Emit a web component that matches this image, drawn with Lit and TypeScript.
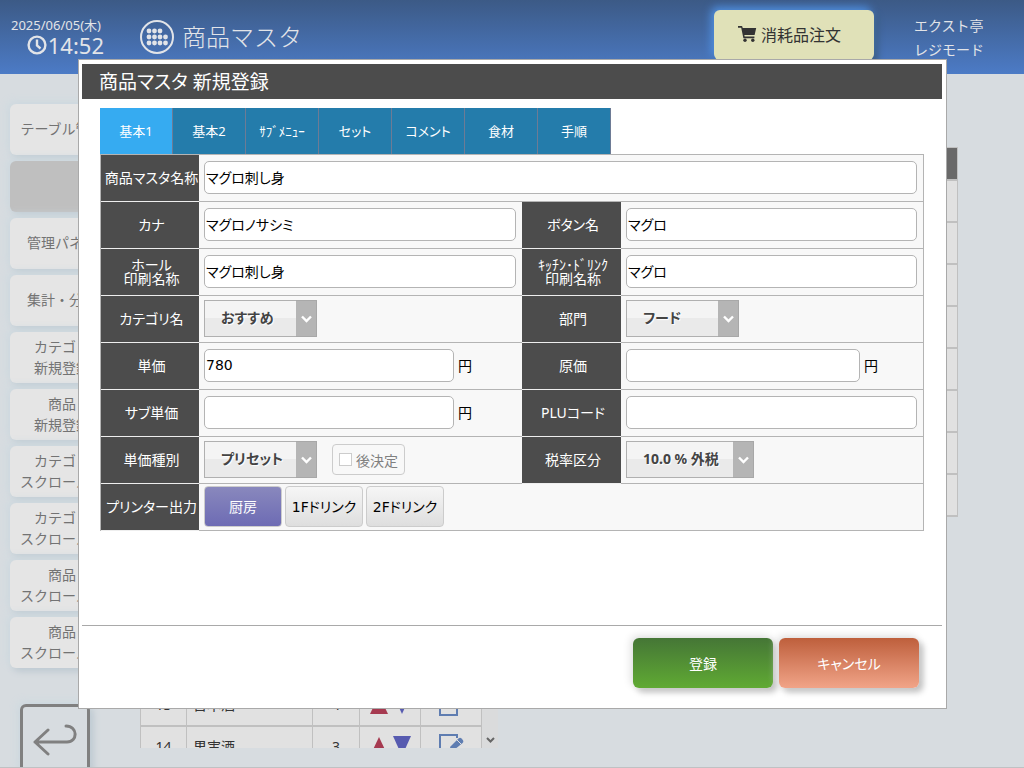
import { LitElement, html, css, svg, nothing } from "lit";
import { customElement, property, state } from "lit/decorators.js";
import { classMap } from "lit/directives/class-map.js";

const baseFont = css`"Noto Sans", "Noto Sans CJK JP", sans-serif`;

const menu: string[][] = [
  ["テーブル管理"],
  [],
  ["管理パネル"],
  ["集計・分析"],
  ["カテゴリ", "新規登録"],
  ["商品", "新規登録"],
  ["カテゴリ", "スクロール上"],
  ["カテゴリ", "スクロール下"],
  ["商品", "スクロール上"],
  ["商品", "スクロール下"],
];

const categories = [
  "おすすめ", "刺し身", "焼き物", "揚げ物", "サラダ", "ご飯物", "デザート",
  "ビール", "サワー", "ハイボール", "ワイン", "焼酎", "日本酒", "果実酒",
];

const products = ["マグロ", "サーモン", "ハマチ", "タイ", "イカ", "タコ", "エビ", "アジ"];

@customElement("page-header")
export class PageHeader extends LitElement {
  static styles = css`
    :host {
      display: flex;
      align-items: flex-start;
      height: 74px;
      box-sizing: border-box;
      padding: 0 40px 0 11px;
      background: linear-gradient(#3c5a86, #4c7bc6);
      color: #e2e4e8;
      font-family: ${baseFont};
    }
    .clock { width: 93px; padding-top: 16px; }
    .date { font-size: 13px; line-height: 18px; white-space: nowrap; }
    .time {
      display: flex;
      align-items: center;
      justify-content: flex-end;
      font-size: 22px;
      line-height: 22px;
    }
    .title {
      display: flex;
      align-items: center;
      gap: 8px;
      height: 74px;
      margin: 0 auto 0 36px;
      font-size: 24px;
      font-weight: 300;
    }
    .title span { padding-bottom: 3px; }
    .order {
      display: flex;
      align-items: center;
      justify-content: center;
      gap: 4px;
      width: 160px;
      height: 50px;
      margin-top: 10px;
      padding: 0 9px 2px 0;
      box-sizing: border-box;
      border: 0;
      border-radius: 6px;
      background: #e0e1b8;
      color: #333;
      font-family: inherit;
      font-size: 16px;
      box-shadow: -3px -3px 8px #4f8fe0, 4px 4px 6px #3b5c82;
    }
    .user {
      margin-left: 40px;
      padding-top: 14px;
      font-size: 14px;
      line-height: 24px;
      white-space: nowrap;
    }
  `;

  render() {
    const dots = [];
    for (let r = 0; r < 3; r++)
      for (let c = 0; c < 4; c++)
        if (!(r === 0 && c === 3)) dots.push(svg`<circle cx=${9 + c * 5.5} cy=${11 + r * 6} r="2.4" />`);
    return html`
      <div class="clock">
        <div class="date">2025/06/05(木)</div>
        <div class="time">
          <svg width="21" height="20" viewBox="0 0 21 20" fill="none" stroke="currentColor" stroke-width="2.4">
            <circle cx="10" cy="10" r="8.4" /><path d="M10 4.5V10.5L13.5 13.5" />
          </svg>
          <span>14:52</span>
        </div>
      </div>
      <div class="title">
        <svg width="34" height="34" viewBox="0 0 34 34" fill="currentColor">
          <circle cx="17" cy="17" r="16" fill="none" stroke="currentColor" stroke-width="2" />${dots}
        </svg>
        <span>商品マスタ</span>
      </div>
      <button class="order">
        <svg width="19" height="16" viewBox="0 0 19 16" fill="currentColor">
          <path d="M0 0H3.6Q4.2 0 4.4 .7L4.7 2H18.2L16.6 9H6.3L6.7 10.6H16.4V12.2H5.4L3.2 1.7H0Z" />
          <circle cx="7" cy="14.2" r="1.7" /><circle cx="14.8" cy="14.2" r="1.7" />
        </svg>
        <span>消耗品注文</span>
      </button>
      <div class="user"><div>エクスト亭</div><div>レジモード</div></div>
    `;
  }
}

@customElement("side-menu")
export class SideMenu extends LitElement {
  static styles = css`
    :host {
      display: block;
      flex: none;
      width: 104px;
      padding: 30px 26px 0 10px;
      font-family: ${baseFont};
    }
    .list { display: flex; flex-direction: column; gap: 6px; }
    .item {
      height: 51px;
      padding: 0 0 2px;
      border: 0;
      border-radius: 6px;
      background: #e5e5e5;
      color: #737373;
      font-family: inherit;
      font-size: 14px;
      line-height: 21px;
      white-space: nowrap;
      box-shadow: -3px -3px 8px #cfdae0, 3px 3px 7px #b9c5cd;
    }
    .current { background: #bfbfbf; }
    .line { display: block; }
    .back {
      display: flex;
      align-items: center;
      justify-content: center;
      width: 70px;
      height: 70px;
      margin: 36px 0 0 10px;
      padding: 0;
      border: 3px solid #808080;
      border-radius: 6px;
      background: transparent;
      color: #808080;
      box-shadow: -3px -3px 8px #cfdae0, 3px 3px 7px #b9c5cd;
    }
  `;

  render() {
    return html`
      <nav class="list">
        ${menu.map((lines) => html`
          <button class=${classMap({ item: true, current: !lines.length })}
            aria-label=${lines.length ? nothing : "商品マスタ"}>
            ${lines.map((l) => html`<span class="line">${l}</span>`)}
          </button>`)}
      </nav>
      <button class="back" aria-label="戻る">
        <svg width="44" height="34" viewBox="0 0 44 34" fill="none" stroke="currentColor" stroke-width="3"
          stroke-linecap="round" stroke-linejoin="round">
          <path d="M15 8L2 20L15 32M2 20H34C45 20 45 4 33 4" />
        </svg>
      </button>
    `;
  }
}

@customElement("master-lists")
export class MasterLists extends LitElement {
  static styles = css`
    :host {
      display: flex;
      flex: 1;
      min-width: 0;
      align-items: flex-start;
      box-sizing: border-box;
      padding: 73px 66px 19px 0;
      overflow: hidden;
      font-family: ${baseFont};
      font-size: 14px;
      color: #333;
    }
    .scroll {
      display: flex;
      height: 100%;
      margin-right: 22px;
      overflow: hidden;
    }
    .table { border-spacing: 0; table-layout: fixed; border-left: 1px solid #c0c0c0; }
    .left { width: 342px; }
    .right { flex: 1; }
    .no { width: 46px; }
    .order { width: 47px; }
    .move { width: 61px; }
    .edit { width: 61px; }
    th, td {
      box-sizing: border-box;
      padding: 0;
      border-right: 1px solid #c0c0c0;
      border-bottom: 2px solid #c0c0c0;
      text-align: center;
    }
    th {
      height: 34px;
      border-top: 1px solid #c0c0c0;
      background: #696969;
      color: #ddd;
      font-weight: 400;
    }
    td { height: 42px; padding-bottom: 2px; background: #e1e1e1; }
    .name { padding-left: 6px; text-align: left; }
    svg { display: block; margin: 0 auto; }
    .bar {
      display: flex;
      align-items: flex-end;
      width: 16px;
      padding-bottom: 4px;
      background: #dadbdc;
    }
  `;

  render() {
    return html`
      <div class="scroll">
        <table class="table left">
          <thead><tr>
            <th class="no">No</th><th>カテゴリ</th><th class="order">順</th>
            <th class="move">移動</th><th class="edit">編集</th>
          </tr></thead>
          <tbody>
            ${categories.map((name, i) => html`<tr>
              <td>${i + 1}</td>
              <td class="name">${name}</td>
              <td>${i === 13 ? 3 : i === 12 ? 4 : i + 1}</td>
              <td><svg width="44" height="20" viewBox="0 0 44 20">
                <path d="M11 1L20 20H2Z" fill="#a63a50" /><path d="M25 0H43L34 20Z" fill="#575bb0" />
              </svg></td>
              <td><svg width="26" height="24" viewBox="0 0 26 24">
                <path d="M19 4V1H2V23H19V16" fill="none" stroke="#5f7db1" stroke-width="2" />
                <path d="M11 17L12.500 12.500L20.500 4.500Q22 3 23.500 4.500L24.800 6Q26 7.500 24.600 9L16 16Z" fill="#5f7db1" />
                <path d="M19 6L23.500 10.500" stroke="#e1e1e1" />
              </svg></td>
            </tr>`)}
          </tbody>
        </table>
        <div class="bar">
          <svg width="9" height="8" viewBox="0 0 9 8" fill="none" stroke="#666" stroke-width="2"><path d="M1 2L4.5 5.5L8 2" /></svg>
        </div>
      </div>
      <table class="table right">
        <thead><tr><th class="no">No</th><th>商品</th></tr></thead>
        <tbody>${products.map((p, i) => html`<tr><td>${i + 1}</td><td class="name">${p}</td></tr>`)}</tbody>
      </table>
    `;
  }
}

@customElement("select-box")
export class SelectBox extends LitElement {
  @property() label = "";
  @property({ type: Array }) options: string[] = [];

  static styles = css`
    :host { display: grid; height: 37px; font-family: ${baseFont}; }
    .select, .arrow { grid-area: 1 / 1; }
    .select {
      width: 100%;
      height: 37px;
      padding: 0 22px 3px 16px;
      border: 1px solid #b0b0b0;
      border-radius: 0;
      appearance: none;
      background: linear-gradient(#f4f4f4 50%, #eaeaea 50%);
      color: #444;
      font-family: inherit;
      font-size: 14px;
      font-weight: 700;
      font-feature-settings: "palt";
      text-shadow: 1px 1px 1px #fff;
    }
    .arrow {
      justify-self: end;
      display: flex;
      align-items: center;
      justify-content: center;
      width: 21px;
      box-sizing: border-box;
      border: 1px solid #a8a8a8;
      border-left: 0;
      background: #b5b5b5;
      pointer-events: none;
    }
  `;

  render() {
    return html`
      <select class="select" aria-label=${this.label}>
        ${this.options.map((o) => html`<option>${o}</option>`)}
      </select>
      <span class="arrow">
        <svg width="11" height="8" viewBox="0 0 11 8" fill="none" stroke="#fff" stroke-width="2.4"><path d="M1 1.5L5.5 6L10 1.5" /></svg>
      </span>
    `;
  }
}

@customElement("product-dialog")
export class ProductDialog extends LitElement {
  @state() private tab = 0;
  @state() private printer = 0;

  static styles = css`
    :host {
      display: block;
      box-sizing: border-box;
      padding: 4px 4px 4px 3px;
      border: 1px solid #a9a9a9;
      background: #fff;
      font-family: ${baseFont};
      font-size: 14px;
      font-feature-settings: "palt";
    }
    .heading {
      margin: 0;
      padding: 2px 17px 0;
      background: #4c4c4c;
      color: #fff;
      font-size: 19px;
      line-height: 33px;
      font-weight: 400;
    }
    .body { box-sizing: border-box; min-height: 526px; padding: 9px 18px; }
    .tabs { display: flex; }
    .tab {
      width: 73px;
      height: 46px;
      padding: 0 0 2px;
      border: 0;
      border-right: 1px solid #6d7b95;
      background: #247cab;
      color: #fff;
      font-family: inherit;
      font-size: 13px;
      white-space: nowrap;
      font-feature-settings: inherit;
    }
    .active { background: #36abf1; }
    .form {
      display: grid;
      grid-template-columns: 98px minmax(0, 323fr) 99px minmax(0, 302fr);
      grid-auto-rows: 47px;
      border: 1px solid #b4b4b4;
      border-bottom: 0;
    }
    .head {
      display: flex;
      align-items: center;
      justify-content: center;
      padding: 0 0 1px 3px;
      border-bottom: 1px solid #eee;
      background: #4c4c4c;
      color: #fff;
      line-height: 14px;
      text-align: center;
      white-space: nowrap;
    }
    .cell {
      display: flex;
      align-items: center;
      padding: 0 6px 1px 5px;
      border-bottom: 1px solid #b4b4b4;
      background: #f8f8f8;
    }
    .wide { grid-column: span 3; }
    .text {
      flex: 1;
      min-width: 0;
      height: 33px;
      box-sizing: border-box;
      padding: 0 1px 1px;
      border: 1px solid #b4b4b4;
      border-radius: 5px;
      background: #fff;
      color: #000;
      font-family: inherit;
      font-size: 14px;
      font-feature-settings: inherit;
    }
    .number { font-family: "DejaVu Sans", sans-serif; }
    .price { flex: 0 1 250px; }
    .cost { flex: 0 1 234px; }
    .unit { margin-left: 4px; padding-bottom: 2px; }
    .medium { width: 113px; }
    .large { width: 128px; }
    .later {
      display: flex;
      align-items: center;
      gap: 4px;
      height: 31px;
      box-sizing: border-box;
      margin-left: 15px;
      padding: 0 6px;
      border: 1px solid #ccc;
      border-radius: 4px;
      color: #808080;
    }
    .check {
      width: 13px;
      height: 13px;
      margin: 0;
      border: 1px solid #ccc;
      appearance: none;
      background: #fff;
    }
    .printers { gap: 3px; }
    .printer {
      width: 78px;
      height: 41px;
      padding: 0 0 2px;
      border: 1px solid #ccc;
      border-radius: 4px;
      background: linear-gradient(#f6f6f6, #dedede);
      color: #000;
      font-family: "DejaVu Sans", "Noto Sans CJK JP", sans-serif;
      font-size: 14px;
      font-feature-settings: inherit;
      white-space: nowrap;
    }
    .chosen { background: linear-gradient(#8988bd, #6d6bb4); color: #fff; }
    .footer {
      display: flex;
      justify-content: flex-end;
      gap: 6px;
      padding: 12px 23px 16px;
      border-top: 1px solid #a9a9a9;
    }
    .action {
      width: 140px;
      height: 50px;
      border: 0;
      border-radius: 6px;
      color: #fff;
      font-family: inherit;
      font-size: 14px;
      font-feature-settings: inherit;
      box-shadow: -2px -2px 8px #ddd, 4px 4px 6px #bbb;
    }
    .save { background: linear-gradient(#457636, #60aa33); }
    .cancel { background: linear-gradient(#be5f3c, #f1a488); }
  `;

  private field(id: string, label: unknown, value = "") {
    return html`
      <label class="head" for=${id}>${label}</label>
      <div class="cell"><input class="text" id=${id} .value=${value} /></div>
    `;
  }

  private amount(id: string, label: string, kind: string, value = "") {
    return html`
      <label class="head" for=${id}>${label}</label>
      <div class="cell">
        <input class="text number ${kind}" id=${id} .value=${value} inputmode="numeric" /><span class="unit">円</span>
      </div>
    `;
  }

  render() {
    const tabs = ["基本1", "基本2", "ｻﾌﾞﾒﾆｭｰ", "セット", "コメント", "食材", "手順"];
    const printers = ["厨房", "1Fドリンク", "2Fドリンク"];
    return html`
      <h1 class="heading">商品マスタ 新規登録</h1>
      <div class="body">
        <div class="tabs" role="tablist">
          ${tabs.map((t, i) => html`
            <button role="tab" aria-selected=${i === this.tab}
              class=${classMap({ tab: true, active: i === this.tab })}
              @click=${() => (this.tab = i)}>${t}</button>`)}
        </div>
        <div class="form">
          <label class="head" for="name">商品マスタ名称</label>
          <div class="cell wide"><input class="text" id="name" .value=${"マグロ刺し身"} /></div>
          ${this.field("kana", "カナ", "マグロノサシミ")}
          ${this.field("button", "ボタン名", "マグロ")}
          ${this.field("hall", html`ホール<br />印刷名称`, "マグロ刺し身")}
          ${this.field("kitchen", html`ｷｯﾁﾝ･ﾄﾞﾘﾝｸ<br />印刷名称`, "マグロ")}
          <div class="head">カテゴリ名</div>
          <div class="cell"><select-box class="medium" label="カテゴリ名" .options=${["おすすめ"]}></select-box></div>
          <div class="head">部門</div>
          <div class="cell"><select-box class="medium" label="部門" .options=${["フード", "ドリンク"]}></select-box></div>
          ${this.amount("price", "単価", "price", "780")}
          ${this.amount("cost", "原価", "cost")}
          ${this.amount("sub", "サブ単価", "price")}
          ${this.field("plu", "PLUコード")}
          <div class="head">単価種別</div>
          <div class="cell">
            <select-box class="medium" label="単価種別" .options=${["プリセット"]}></select-box>
            <label class="later"><input class="check" type="checkbox" disabled />後決定</label>
          </div>
          <div class="head">税率区分</div>
          <div class="cell"><select-box class="large" label="税率区分" .options=${["10.0 % 外税"]}></select-box></div>
          <div class="head">プリンター出力</div>
          <div class="cell wide printers">
            ${printers.map((p, i) => html`
              <button class=${classMap({ printer: true, chosen: i === this.printer })}
                @click=${() => (this.printer = i)}>${p}</button>`)}
          </div>
        </div>
      </div>
      <div class="footer">
        <button class="action save">登録</button>
        <button class="action cancel">キャンセル</button>
      </div>
    `;
  }
}

@customElement("app-root")
export class AppRoot extends LitElement {
  static styles = css`
    :host {
      display: flex;
      flex-direction: column;
      height: 100vh;
      box-sizing: border-box;
      overflow: hidden;
      border-bottom: 1px solid #bfc1c3;
      background: #d7dce0;
    }
    .main { display: flex; flex: 1; min-height: 0; overflow: hidden; }
    .overlay {
      position: fixed;
      inset: 0;
      display: grid;
      align-items: center;
      padding: 0 77px 0 78px;
    }
  `;

  render() {
    return html`
      <page-header></page-header>
      <div class="main"><side-menu></side-menu><master-lists></master-lists></div>
      <div class="overlay"><product-dialog role="dialog" aria-modal="true"></product-dialog></div>
    `;
  }
}
